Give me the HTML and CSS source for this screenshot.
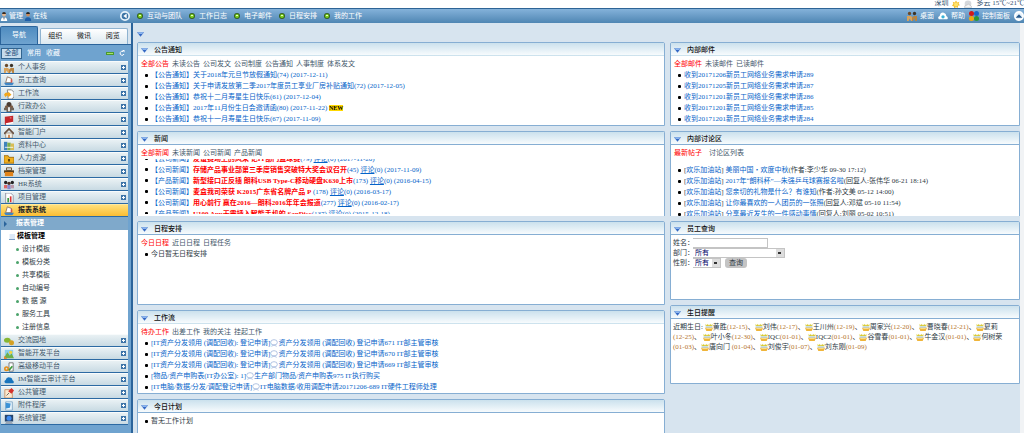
FILE: index.html
```
<!DOCTYPE html>
<html lang="zh-CN">
<head>
	<meta charset="utf-8"/>
	<title>办公平台</title>
	<link rel="stylesheet" href="styles.css">
</head>
<body>
<svg class="defs" width="0" height="0">
	<symbol id="i-people" viewBox="0 0 12 12"><circle cx="3" cy="3" r="2" fill="#6b4a2a"/><circle cx="9" cy="3" r="2" fill="#3d3327"/><path d="M0 6h5l2 3-1 3H5L3 9l-1 3H0z" fill="#d8a35c"/><path d="M12 6H8L6 8v4h1l2-3 1 3h2z" fill="#b98542"/></symbol>
	<symbol id="i-tray" viewBox="0 0 12 12"><path d="M4 1l5 2v5H2z" fill="#fff" stroke="#8a6b52"/><path d="M8 4h2v4H8z" fill="#d9574a"/><path d="M0 8h12l-2 3H2z" fill="#3f86c6"/></symbol>
	<symbol id="i-flow" viewBox="0 0 12 12"><path d="M4 1h5l3 3v6l-3 2H5z" fill="#fff" stroke="#777"/><path d="M0 7q2-4 5-2V3l4 4-4 3V8Q3 7 2 10z" fill="#f2a71b"/></symbol>
	<symbol id="i-group" viewBox="0 0 12 12"><circle cx="6" cy="3" r="3" fill="#4a3c33"/><circle cx="3" cy="6" r="2" fill="#7b5b43"/><circle cx="9" cy="6" r="2" fill="#7b5b43"/><path d="M0 7h12v3H9v2H3v-2H0z" fill="#6d6257"/><path d="M5 7h2v4H5z" fill="#fff"/></symbol>
	<symbol id="i-book" viewBox="0 0 12 12"><path d="M1 2l10-1v8L2 12l-1-1z" fill="#c3262b"/><path d="M2 10l9-2v2l-8 2z" fill="#fff"/><path d="M7 3h2v1H7z" fill="#f5aaa5"/></symbol>
	<symbol id="i-home" viewBox="0 0 12 12"><path d="M2 6h8v6H2z" fill="#f7f3ea" stroke="#9b8a78"/><path d="M0 7l6-6 6 6" fill="none" stroke="#6b5040" stroke-width="2"/><path d="M5 8h2v4H5z" fill="#c9773a"/></symbol>
	<symbol id="i-books" viewBox="0 0 12 12"><path d="M0 1h4v10H0z" fill="#3f83bd"/><path d="M4 2h4v9H4z" fill="#7fae4b"/><path d="M8 3h4v8H8z" fill="#d8bd55"/><path d="M1 7h10v1H1z" fill="#fff"/></symbol>
	<symbol id="i-lock" viewBox="0 0 12 12"><path d="M0 2h5l1 2h6v7H0z" fill="#f0b01e" stroke="#9d6808"/><path d="M5 6h2v3H5z" fill="#513606"/></symbol>
	<symbol id="i-case" viewBox="0 0 12 12"><path d="M3 1h6v3H3z" fill="none" stroke="#62421a"/><path d="M0 4h12v3H0z" fill="#5b401d"/><path d="M1 6h10v5H1z" fill="#e2841b"/></symbol>
	<symbol id="i-team" viewBox="0 0 12 12"><circle cx="2" cy="3" r="2" fill="#222"/><circle cx="6" cy="4" r="2" fill="#4a2d20"/><circle cx="10" cy="3" r="2" fill="#222"/><path d="M0 6h4v4H0z" fill="#d66"/><path d="M4 6h4v5H4z" fill="#88c"/><path d="M8 6h4v4H8z" fill="#b9a"/></symbol>
	<symbol id="i-chart" viewBox="0 0 12 12"><path d="M2 0h6l3 3v9H2z" fill="#fff" stroke="#889"/><path d="M4 6h2v5H4z" fill="#3a9c3f"/><path d="M7 4h2v7H7z" fill="#d33"/></symbol>
	<symbol id="i-chat" viewBox="0 0 12 12"><ellipse cx="4" cy="5" rx="4" ry="3" fill="#86b632"/><ellipse cx="9" cy="8" rx="3" ry="3" fill="#d4a025"/></symbol>
	<symbol id="i-pic" viewBox="0 0 12 12"><path d="M1 1h10v10H1z" fill="#8bcdeb"/><path d="M0 11l4-7 3 4 2-3 3 6z" fill="#6db04a"/><circle cx="8" cy="4" r="2" fill="#f3d33c"/><path d="M0 8l4 4H0z" fill="#e98832"/></symbol>
	<symbol id="i-mobile" viewBox="0 0 12 12"><path d="M6 1h5v10H6z" fill="#fff" stroke="#666"/><circle cx="3" cy="8" r="2" fill="none" stroke="#e58f1b" stroke-width="2"/><path d="M6 10l4-5" stroke="#3d9a3a" stroke-width="2"/></symbol>
	<symbol id="i-cloud" viewBox="0 0 12 12"><path d="M2 10q-3-2 0-4 1-4 5-3 3 0 3 3 3 2 1 4z" fill="#1774bd"/></symbol>
	<symbol id="i-pin" viewBox="0 0 12 12"><path d="M1 2h9v10H1z" fill="#fbe9cf" stroke="#c98b5d"/><path d="M5 4l4-4 3 3-3 4z" fill="#d5322c"/><path d="M6 6L3 9" stroke="#555"/></symbol>
	<symbol id="i-file" viewBox="0 0 12 12"><path d="M2 1h8v10H2z" fill="#e7f4fc" stroke="#7da5c4"/><path d="M2 2l6 1-1 5-5 1z" fill="#3b92d6"/></symbol>
	<symbol id="i-monitor" viewBox="0 0 12 12"><path d="M1 1h10v8H1z" fill="#26466f"/><circle cx="6" cy="5" r="3" fill="#3d8bf2"/><path d="M3 9h6l2 3H1z" fill="#98a6b5"/></symbol>
	<symbol id="i-man" viewBox="0 0 12 14"><circle cx="6" cy="4" r="3" fill="#e3b48c"/><path d="M3 3q0-3 3-3t3 3z" fill="#38281c"/><path d="M1 14q0-6 5-6t5 6z" fill="#fff"/><path d="M5 8h2l-1 5z" fill="#345"/></symbol>
	<symbol id="i-online" viewBox="0 0 12 14"><circle cx="6" cy="4" r="3" fill="#c98a5c"/><path d="M3 3q0-3 3-3t3 3z" fill="#222"/><path d="M1 14q0-6 5-6t5 6z" fill="#1f5fa8"/></symbol>
	<symbol id="i-dot" viewBox="0 0 12 12"><circle cx="6" cy="6" r="6" fill="#35611f"/><circle cx="6" cy="6" r="4" fill="#7ed321"/><path d="M4 4h4v2H4z" fill="#e6ffc0"/></symbol>
	<symbol id="i-back" viewBox="0 0 12 12"><circle cx="6" cy="6" r="5" fill="#3c74a5" stroke="#e8f3fb" stroke-width="2"/><path d="M8 3v6L4 6z" fill="#fff"/></symbol>
	<symbol id="i-up" viewBox="0 0 12 12"><circle cx="6" cy="6" r="5" fill="#e8f3fb" stroke="#fff" stroke-width="2"/><path d="M2 8h8L6 4z" fill="#27598c"/></symbol>
	<symbol id="i-help" viewBox="0 0 12 12"><path d="M1 10q-2-3 1-4 1-5 5-4 3 1 3 4 3 2 1 4z" fill="#fff"/><circle cx="6" cy="7" r="2" fill="#3bb3d8"/></symbol>
	<symbol id="i-panel" viewBox="0 0 12 12"><circle cx="3" cy="3" r="3" fill="#d11a1a"/><circle cx="9" cy="3" r="3" fill="#1c66c9"/><circle cx="3" cy="9" r="3" fill="#f0a80d"/><circle cx="9" cy="9" r="3" fill="#2c9a36"/></symbol>
	<symbol id="i-sun" viewBox="0 0 12 12"><path d="M6 0l2 3 3-1-1 3 2 2-3 1v3l-3-1-3 2V9L0 8l2-3-1-3 3 1z" fill="#f6c335"/><circle cx="6" cy="6" r="3" fill="#ffe36c"/></symbol>
	<symbol id="i-moon" viewBox="0 0 12 12"><circle cx="6" cy="5" r="5" fill="#d5d8dc"/><path d="M1 11q-1-4 3-4 3-3 5 0 3 1 2 4z" fill="#f4f4f4" stroke="#bbb"/></symbol>
	<symbol id="i-cake" viewBox="0 0 12 12"><path d="M1 1l2 3 1-3 2 3 2-3 1 3 2-3v4H1z" fill="#d6c51d"/><path d="M1 5h10v3H1z" fill="#b9d6ea"/><path d="M0 7h12l-2 5H2z" fill="#f0b53a"/><path d="M2 8h8v1H2z" fill="#fff2b3"/></symbol>
	<symbol id="i-talk" viewBox="0 0 12 12"><ellipse cx="6" cy="5" rx="5" ry="4" fill="#fff" stroke="#8fa9d6"/><path d="M2 11q4-4 8 0" fill="none" stroke="#8fa9d6"/></symbol>
	<symbol id="i-tri" viewBox="0 0 12 8"><path d="M0 0h12L6 8z" fill="#3468c4"/><path d="M1 0h10L9 3H3z" fill="#8db6ee"/></symbol>
	<symbol id="i-plus" viewBox="0 0 5 5"><path d="M0 0h5v5H0z" fill="#3d74a8"/><path d="M2 1h1v1h1v1H3v1H2V3H1V2h1z" fill="#fff"/></symbol>
	<symbol id="i-page" viewBox="0 0 12 12"><path d="M1 0h11v10H1z" fill="#dce9f7"/><path d="M0 10h12v2H0z" fill="#7f9fc4"/></symbol>
	<symbol id="i-refresh" viewBox="0 0 12 12"><path d="M10 8a4 4 0 1 1-2-5" fill="none" stroke="#fff" stroke-width="2"/><path d="M6 0h5v5z" fill="#fff"/></symbol>
</svg>

<div class="weather">
	<span>深圳</span>
	<svg class="icon-m"><use href="#i-sun"/></svg>
	<svg class="icon-m"><use href="#i-moon"/></svg>
	<span>多云 15℃~21℃</span>
</div>

<header class="topbar">
	<div class="user">
		<svg class="icon-m"><use href="#i-man"/></svg><span>管理</span>
		<svg class="icon-m"><use href="#i-online"/></svg><span>在线</span>
		<button class="plain push" aria-label="收起"><svg class="icon-l"><use href="#i-back"/></svg></button>
	</div>
	<nav class="quick">
		<a href="#"><svg class="icon-s"><use href="#i-dot"/></svg>互动与团队</a>
		<a href="#"><svg class="icon-s"><use href="#i-dot"/></svg>工作日志</a>
		<a href="#"><svg class="icon-s"><use href="#i-dot"/></svg>电子邮件</a>
		<a href="#"><svg class="icon-s"><use href="#i-dot"/></svg>日程安排</a>
		<a href="#"><svg class="icon-s"><use href="#i-dot"/></svg>我的工作</a>
	</nav>
	<nav class="tools">
		<a href="#"><svg class="icon-l"><use href="#i-people"/></svg>桌面</a>
		<a href="#"><svg class="icon-l"><use href="#i-help"/></svg>帮助</a>
		<a href="#"><svg class="icon-l"><use href="#i-panel"/></svg>控制面板</a>
		<button class="plain" aria-label="向上"><svg class="icon-l"><use href="#i-up"/></svg></button>
	</nav>
</header>

<div class="layout">
	<aside class="side">
		<div class="side-tabs">
			<button class="side-tab active">导航</button>
			<div class="side-rest">
				<button class="side-tab">组织</button>
				<button class="side-tab">微讯</button>
				<button class="side-tab">阅览</button>
			</div>
		</div>
		<div class="filter">
			<button class="on">全部</button>
			<button>常用</button>
			<button>收藏</button>
			<span class="minus push"></span>
			<svg class="icon-s"><use href="#i-refresh"/></svg>
		</div>
		<ul class="menu">
			<li><a href="#"><svg class="icon-l"><use href="#i-people"/></svg>个人事务<svg class="more"><use href="#i-plus"/></svg></a></li>
			<li><a href="#"><svg class="icon-l"><use href="#i-tray"/></svg>员工查询<svg class="more"><use href="#i-plus"/></svg></a></li>
			<li><a href="#"><svg class="icon-l"><use href="#i-flow"/></svg>工作流<svg class="more"><use href="#i-plus"/></svg></a></li>
			<li><a href="#"><svg class="icon-l"><use href="#i-group"/></svg>行政办公<svg class="more"><use href="#i-plus"/></svg></a></li>
			<li><a href="#"><svg class="icon-l"><use href="#i-book"/></svg>知识管理<svg class="more"><use href="#i-plus"/></svg></a></li>
			<li><a href="#"><svg class="icon-l"><use href="#i-home"/></svg>智能门户<svg class="more"><use href="#i-plus"/></svg></a></li>
			<li><a href="#"><svg class="icon-l"><use href="#i-books"/></svg>资料中心<svg class="more"><use href="#i-plus"/></svg></a></li>
			<li><a href="#"><svg class="icon-l"><use href="#i-lock"/></svg>人力资源<svg class="more"><use href="#i-plus"/></svg></a></li>
			<li><a href="#"><svg class="icon-l"><use href="#i-case"/></svg>档案管理<svg class="more"><use href="#i-plus"/></svg></a></li>
			<li><a href="#"><svg class="icon-l"><use href="#i-team"/></svg>HR系统<svg class="more"><use href="#i-plus"/></svg></a></li>
			<li><a href="#"><svg class="icon-l"><use href="#i-chart"/></svg>项目管理<svg class="more"><use href="#i-plus"/></svg></a></li>
			<li>
				<a class="current" href="#"><svg class="icon-l"><use href="#i-tray"/></svg>报表系统</a>
				<ul class="submenu">
					<li><a class="group" href="#">报表管理</a></li>
					<li><a class="folder" href="#"><svg class="icon-s"><use href="#i-page"/></svg>模板管理</a></li>
					<li><a class="leaf" href="#">设计模板</a></li>
					<li><a class="leaf" href="#">模板分类</a></li>
					<li><a class="leaf" href="#">共享模板</a></li>
					<li><a class="leaf" href="#">自动编号</a></li>
					<li><a class="leaf" href="#">数 据 源</a></li>
					<li><a class="leaf" href="#">服务工具</a></li>
					<li><a class="leaf" href="#">注册信息</a></li>
				</ul>
			</li>
			<li><a href="#"><svg class="icon-l"><use href="#i-chat"/></svg>交流园地<svg class="more"><use href="#i-plus"/></svg></a></li>
			<li><a href="#"><svg class="icon-l"><use href="#i-pic"/></svg>智能开发平台<svg class="more"><use href="#i-plus"/></svg></a></li>
			<li><a href="#"><svg class="icon-l"><use href="#i-mobile"/></svg>高级移动平台<svg class="more"><use href="#i-plus"/></svg></a></li>
			<li><a href="#"><svg class="icon-l"><use href="#i-cloud"/></svg>IM智能云审计平台<svg class="more"><use href="#i-plus"/></svg></a></li>
			<li><a href="#"><svg class="icon-l"><use href="#i-pin"/></svg>公共管理<svg class="more"><use href="#i-plus"/></svg></a></li>
			<li><a href="#"><svg class="icon-l"><use href="#i-file"/></svg>附件程序<svg class="more"><use href="#i-plus"/></svg></a></li>
			<li><a href="#"><svg class="icon-l"><use href="#i-monitor"/></svg>系统管理<svg class="more"><use href="#i-plus"/></svg></a></li>
		</ul>
	</aside>

	<main class="main">
		<svg class="tri"><use href="#i-tri"/></svg>
		<div class="columns">
			<div class="col">
				<section class="box">
					<h2><svg class="tri"><use href="#i-tri"/></svg>公告通知</h2>
					<nav class="tabs"><a class="on" href="#">全部公告</a><a href="#">未读公告</a><a href="#">公司发文</a><a href="#">公司制度</a><a href="#">公告通知</a><a href="#">人事制度</a><a href="#">体系发文</a></nav>
					<ul class="list">
						<li><a href="#">【公告通知】关于2018年元旦节放假通知(74) (2017-12-11)</a></li>
						<li><a href="#">【公告通知】关于申请发放第二季2017年度员工享业厂房补贴通知(72) (2017-12-05)</a></li>
						<li><a href="#">【公告通知】恭祝十二月寿星生日快乐(61) (2017-12-04)</a></li>
						<li><a href="#">【公告通知】2017年11月份生日会邀请函(80) (2017-11-22)</a> <span class="new">NEW</span></li>
						<li><a href="#">【公告通知】恭祝十一月寿星生日快乐(67) (2017-11-09)</a></li>
					</ul>
				</section>
				<section class="box cut">
					<h2><svg class="tri"><use href="#i-tri"/></svg>新闻</h2>
					<nav class="tabs"><a class="on" href="#">全部新闻</a><a href="#">未读新闻</a><a href="#">公司新闻</a><a href="#">产品新闻</a></nav>
					<div class="scroller">
						<ul class="list red">
							<li><a href="#">【公司新闻】<b>友谊赛场上的风采 记IT部门篮球赛</b>(79)</a> <a class="cmt" href="#">评论</a><a href="#">(0) (2017-11-20)</a></li>
							<li><a href="#">【公司新闻】<b>存储产品事业部第三季度销售突破特大奖会议召开</b>(45)</a> <a class="cmt" href="#">评论</a><a href="#">(0) (2017-11-09)</a></li>
							<li><a href="#">【产品新闻】<b>新型接口正反插 朗科USB Type-C移动硬盘K630上市</b>(173)</a> <a class="cmt" href="#">评论</a><a href="#">(0) (2016-04-15)</a></li>
							<li><a href="#">【公司新闻】<b>麦盒我司荣获 K2015广东省名牌产品 P</b> (178)</a> <a class="cmt" href="#">评论</a><a href="#">(0) (2016-03-17)</a></li>
							<li><a href="#">【公司新闻】<b>用心前行 赢在2016—朗科2016年年会报道</b>(277)</a> <a class="cmt" href="#">评论</a><a href="#">(0) (2016-02-17)</a></li>
							<li><a href="#">【产品新闻】<b>U100 App无需插入智能手机的 SanDisc</b>(137)</a> <a class="cmt" href="#">评论</a><a href="#">(0) (2015-12-18)</a></li>
						</ul>
					</div>
				</section>
				<section class="box">
					<h2 class="line"><svg class="tri"><use href="#i-tri"/></svg>日程安排</h2>
					<nav class="tabs"><a class="on" href="#">今日日程</a><a href="#">近日日程</a><a href="#">日程任务</a></nav>
					<ul class="list text"><li>今日暂无日程安排</li></ul>
				</section>
				<section class="box">
					<h2><svg class="tri"><use href="#i-tri"/></svg>工作流</h2>
					<nav class="tabs"><a class="on" href="#">待办工作</a><a href="#">出差工作</a><a href="#">我的关注</a><a href="#">挂起工作</a></nav>
					<ul class="list">
						<li><a href="#">[IT资产分发领用 (调配回收): 登记申请]<svg class="talk"><use href="#i-talk"/></svg>资产分发领用 (调配回收) 登记申请671 IT部主管审核</a></li>
						<li><a href="#">[IT资产分发领用 (调配回收): 登记申请]<svg class="talk"><use href="#i-talk"/></svg>资产分发领用 (调配回收) 登记申请670 IT部主管审核</a></li>
						<li><a href="#">[IT资产分发领用 (调配回收): 登记申请]<svg class="talk"><use href="#i-talk"/></svg>资产分发领用 (调配回收) 登记申请669 IT部主管审核</a></li>
						<li><a href="#">[物品/资产申购表(IT办公室): 1]<svg class="talk"><use href="#i-talk"/></svg>生产部门物品/资产申购表975 IT执行购买</a></li>
						<li><a href="#">[IT电脑/数据/分发/调配登记申请]<svg class="talk"><use href="#i-talk"/></svg>IT电脑数据/收用调配申请20171206-689 IT硬件工程师处理</a></li>
					</ul>
				</section>
				<section class="box">
					<h2 class="line"><svg class="tri"><use href="#i-tri"/></svg>今日计划</h2>
					<ul class="list text plan"><li>暂无工作计划</li></ul>
				</section>
			</div>

			<div class="col">
				<section class="box">
					<h2><svg class="tri"><use href="#i-tri"/></svg>内部邮件</h2>
					<nav class="tabs"><a class="on" href="#">全部邮件</a><a href="#">未读邮件</a><a href="#">已读邮件</a></nav>
					<ul class="list">
						<li><a href="#">收到20171206新员工网络业务需求申请289</a></li>
						<li><a href="#">收到20171205新员工网络业务需求申请287</a></li>
						<li><a href="#">收到20171201新员工网络业务需求申请286</a></li>
						<li><a href="#">收到20171201新员工网络业务需求申请285</a></li>
						<li><a href="#">收到20171201新员工网络业务需求申请284</a></li>
					</ul>
				</section>
				<section class="box cut">
					<h2 class="line"><svg class="tri"><use href="#i-tri"/></svg>内部讨论区</h2>
					<nav class="tabs wide"><a class="on" href="#">最新帖子</a><a href="#">讨论区列表</a></nav>
					<ul class="list forum">
						<li>[<a href="#">欢乐加油站</a>] <a href="#">美丽中国・欢度中秋</a>(作者:李少华 09-30 17:12)</li>
						<li>[<a href="#">欢乐加油站</a>] <a href="#">2017年“朗科杯”—朱强乒乓球赛报名啦</a>(回复人:张伟华 06-21 18:14)</li>
						<li>[<a href="#">欢乐加油站</a>] <a href="#">您亲切的礼物是什么？有谁知</a>(作者:孙文美 05-12 14:00)</li>
						<li>[<a href="#">欢乐加油站</a>] <a href="#">让你最喜欢的一人团员的一张照</a>(回复人:邓斌 05-10 11:54)</li>
						<li>[<a href="#">欢乐加油站</a>] <a href="#">分享最近发生的一件感动事情</a>(回复人:刘丽 05-02 10:51)</li>
					</ul>
				</section>
				<section class="box">
					<h2 class="line"><svg class="tri"><use href="#i-tri"/></svg>员工查询</h2>
					<form class="search">
						<div class="field"><label for="name">姓名：</label><input id="name" class="name" type="text"></div>
						<div class="field"><label for="dept">部门：</label><select id="dept" class="dept"><option>所有</option></select></div>
						<div class="field"><label for="sex">性别：</label><select id="sex" class="sex"><option>所有</option></select><button type="button">查询</button></div>
					</form>
				</section>
				<section class="box">
					<h2 class="line"><svg class="tri"><use href="#i-tri"/></svg>生日提醒</h2>
					<p class="birthday">近期生日: <svg class="cake"><use href="#i-cake"/></svg>黄胜<i>(12-15)</i>、<svg class="cake"><use href="#i-cake"/></svg>刘伟<i>(12-17)</i>、<svg class="cake"><use href="#i-cake"/></svg>王川州<i>(12-19)</i>、<svg class="cake"><use href="#i-cake"/></svg>周家兴<i>(12-20)</i>、<svg class="cake"><use href="#i-cake"/></svg>曹晓春<i>(12-21)</i>、<svg class="cake"><use href="#i-cake"/></svg>夏莉<i>(12-25)</i>、
						<svg class="cake"><use href="#i-cake"/></svg>叶小冬<i>(12-30)</i>、<svg class="cake"><use href="#i-cake"/></svg>IQC<i>(01-01)</i>、<svg class="cake"><use href="#i-cake"/></svg>IQC2<i>(01-01)</i>、<svg class="cake"><use href="#i-cake"/></svg>谷雪春<i>(01-01)</i>、<svg class="cake"><use href="#i-cake"/></svg>牛金汉<i>(01-01)</i>、<svg class="cake"><use href="#i-cake"/></svg>何树荣<i>(01-03)</i>、<svg class="cake"><use href="#i-cake"/></svg>唐向门
						<i>(01-04)</i>、<svg class="cake"><use href="#i-cake"/></svg>刘俊宇<i>(01-07)</i>、<svg class="cake"><use href="#i-cake"/></svg>刘东刚<i>(01-09)</i>
					</p>
				</section>
			</div>
		</div>
	</main>
	<div class="rail"></div>
</div>
</body>
</html>
```

FILE: styles.css
```
*{
	box-sizing: border-box;
}
html, body{
	height: 100%;
}
body{
	display: flex;
	flex-direction: column;
	margin: 0;
	overflow: hidden;
	background: #d7e4ef;
	color: #2e3a44;
	font: 7px/11px "Liberation Serif", "Noto Sans CJK SC", serif;
}
a{
	color: inherit;
	text-decoration: none;
}
ul{
	margin: 0;
	padding: 0;
	list-style: none;
}
button{
	margin: 0;
	padding: 0;
	border: 0;
	background: none;
	color: inherit;
	font: inherit;
}
svg{
	flex: none;
}
.defs{
	position: absolute;
}
.icon-s{
	width: 6px;
	height: 6px;
}
.icon-m{
	width: 8px;
	height: 9px;
}
.icon-l{
	width: 10px;
	height: 10px;
}
.tri{
	display: block;
	width: 7px;
	height: 5px;
}
.push{
	margin-left: auto;
}
.plain{
	display: flex;
}

/* top */
.weather{
	display: flex;
	flex: none;
	justify-content: flex-end;
	gap: 4px;
	height: 8px;
	line-height: 6px;
	overflow: hidden;
	background: #fff;
	color: #31506e;
}
.topbar{
	display: flex;
	flex: none;
	align-items: center;
	height: 15px;
	border-top: 1px solid #2d6496;
	background: linear-gradient(#84b2da, #4f86b3);
	color: #fff;
}
.user{
	display: flex;
	align-items: center;
	gap: 1px;
	width: 130px;
}
.quick{
	display: flex;
	gap: 7px;
	padding-left: 7px;
}
.quick a, .tools a{
	display: flex;
	align-items: center;
	gap: 4px;
}
.tools{
	display: flex;
	align-items: center;
	gap: 4px;
	margin-left: auto;
}
.tools a{
	gap: 3px;
}

/* sidebar */
.layout{
	display: flex;
	flex: 1;
	min-height: 0;
}
.side{
	flex: none;
	width: 133px;
	padding: 3px 3px 0 1px;
	border-right: 2px solid #2b649b;
	background: #6fa3cf;
	overflow: hidden;
}
.side-tabs{
	display: flex;
	align-items: flex-end;
	gap: 2px;
	margin: -3px -3px 0 -1px;
	padding: 3px 3px 0 0;
	background: #d7e4ef;
	border-bottom: 1px solid #2b649b;
}
.side-tab{
	flex: 1;
	height: 15px;
}
.side-tab.active{
	flex: none;
	width: 38px;
	height: 18px;
	border: 1px solid #2b649b;
	border-bottom: 0;
	border-radius: 2px 2px 0 0;
	background: linear-gradient(#4f8cc0, #6fa3cf);
	color: #fff;
}
.side-rest{
	display: flex;
	flex: 1;
	border: 1px solid #8fb3d0;
	border-bottom: 0;
	border-radius: 2px 2px 0 0;
	background: linear-gradient(#fff, #dbe8f0);
	color: #111;
}
.filter{
	display: flex;
	align-items: center;
	gap: 5px;
	height: 16px;
	padding: 0 3px 0 0;
	color: #fff;
}
.filter .on{
	width: 21px;
	border: 1px solid #32648f;
	background: #c5dbec;
	color: #1d4a78;
	line-height: 9px;
}
.minus{
	width: 8px;
	height: 3px;
	border: 1px solid #4b9a2c;
	background: #a8e06f;
}
.filter .push{
	margin-left: auto;
}
.menu > li > a{
	display: flex;
	align-items: center;
	gap: 4px;
	height: 13px;
	padding: 0 2px 0 3px;
	border-top: 1px solid #f8fbfc;
	border-bottom: 1px solid #2c6aa3;
	background: linear-gradient(#e9f1f4, #c8dae3);
	color: #43586b;
}
.menu > li > a.current{
	border-top-color: #ffe9a0;
	background: linear-gradient(#ffe07a, #fbbd33);
	color: #222;
	font-weight: bold;
}
.more{
	width: 5px;
	height: 5px;
	margin-left: auto;
}
.submenu{
	background: #fff;
}
.submenu a{
	display: flex;
	align-items: center;
	height: 13px;
}
.submenu .group{
	gap: 9px;
	padding-left: 3px;
	background: #7fa9cb;
	color: #fff;
	font-weight: bold;
}
.group::before{
	content: "";
	border: 3px solid transparent;
	border-left-color: #2b649b;
	border-right: 0;
}
.submenu .folder{
	gap: 2px;
	padding-left: 8px;
	color: #000;
	font-weight: bold;
}
.submenu .leaf{
	gap: 3px;
	padding-left: 15px;
}
.leaf::before{
	content: "";
	width: 3px;
	height: 3px;
	border-radius: 50%;
	background: #4ba36b;
}

/* panels */
.main{
	flex: 1;
	min-width: 0;
	padding: 9px 0 0 4px;
	overflow: hidden;
}
.columns{
	display: grid;
	grid-template-columns: 528fr 350fr;
	gap: 5px;
	margin-top: 5px;
}
.col{
	display: flex;
	flex-direction: column;
	gap: 5px;
}
.box{
	min-height: 84px;
	border: 1px solid #86aed3;
	border-radius: 2px 2px 0 0;
	background: #fff;
}
.col:last-child .box:nth-child(n+3){
	min-height: 79px;
}
.cut{
	height: 85px;
	border-bottom: 0;
	overflow: hidden;
}
.box h2{
	display: flex;
	align-items: center;
	gap: 6px;
	height: 13px;
	margin: 0 0 3px;
	padding: 2px 0 0 3px;
	border-bottom: 1px solid transparent;
	background: linear-gradient(#cbe1ed, #f7fbfd);
	color: #111;
	font-size: 7px;
	font-weight: 500;
	line-height: 11px;
}
.box h2.line, .cut h2{
	border-bottom-color: #86aed3;
}
.tabs{
	display: flex;
	gap: 3px;
	padding-left: 3px;
	color: #43586b;
}
.tabs.wide{
	gap: 7px;
}
.tabs .on{
	color: #f00;
}
.list{
	padding-left: 7px;
	color: #0563c9;
	white-space: nowrap;
}
.list li::before{
	content: "";
	display: inline-block;
	width: 3px;
	height: 3px;
	margin-right: 3px;
	border-radius: 1px;
	background: #000;
	vertical-align: middle;
}
.list.text, .list.forum{
	color: #2e3a44;
}
.forum{
	padding-top: 6px;
}
.forum a{
	color: #0563c9;
}
.red b{
	color: #f00;
}
.cmt{
	text-decoration: underline;
}
.new{
	background: #ffd800;
	color: #000;
	font-size: 6px;
	font-weight: bold;
}
.talk{
	width: 8px;
	height: 8px;
	vertical-align: middle;
}
.cake{
	width: 8px;
	height: 8px;
	vertical-align: middle;
}
/* the news list is scrolled down a few lines */
.scroller{
	display: flex;
	flex-direction: column;
	justify-content: center;
	height: 55px;
	overflow: hidden;
}
.search{
	padding: 0 2px;
}
.field{
	display: flex;
	align-items: center;
	height: 10px;
}
.field label{
	width: 20px;
	white-space: nowrap;
}
.field input, .field select{
	height: 10px;
	margin: 0;
	padding: 0 2px;
	border: 1px solid #c4c4c4;
	border-width: 1px 1px 1px 0;
	border-radius: 0;
	background: #fff;
	color: #006;
	font: inherit;
	line-height: 8px;
}
.field select{
	appearance: none;
	background: linear-gradient(#333, #333) right 3px center / 3px 2px no-repeat, linear-gradient(#ddd, #ddd) right / 8px 100% no-repeat, #fff;
}
.field .name{
	width: 75px;
}
.field .dept{
	width: 92px;
}
.field .sex{
	width: 28px;
}
.field button{
	width: 22px;
	height: 10px;
	margin-left: 4px;
	border-radius: 3px;
	background: #c4c4c4;
	line-height: 10px;
}
.birthday{
	margin: 0;
	padding: 0 0 0 2px;
	line-height: 10px;
}
.birthday i{
	color: #b5742e;
	font-style: normal;
	white-space: nowrap;
}
.rail{
	flex: none;
	width: 4px;
	background: #f1f3f5;
}
```
